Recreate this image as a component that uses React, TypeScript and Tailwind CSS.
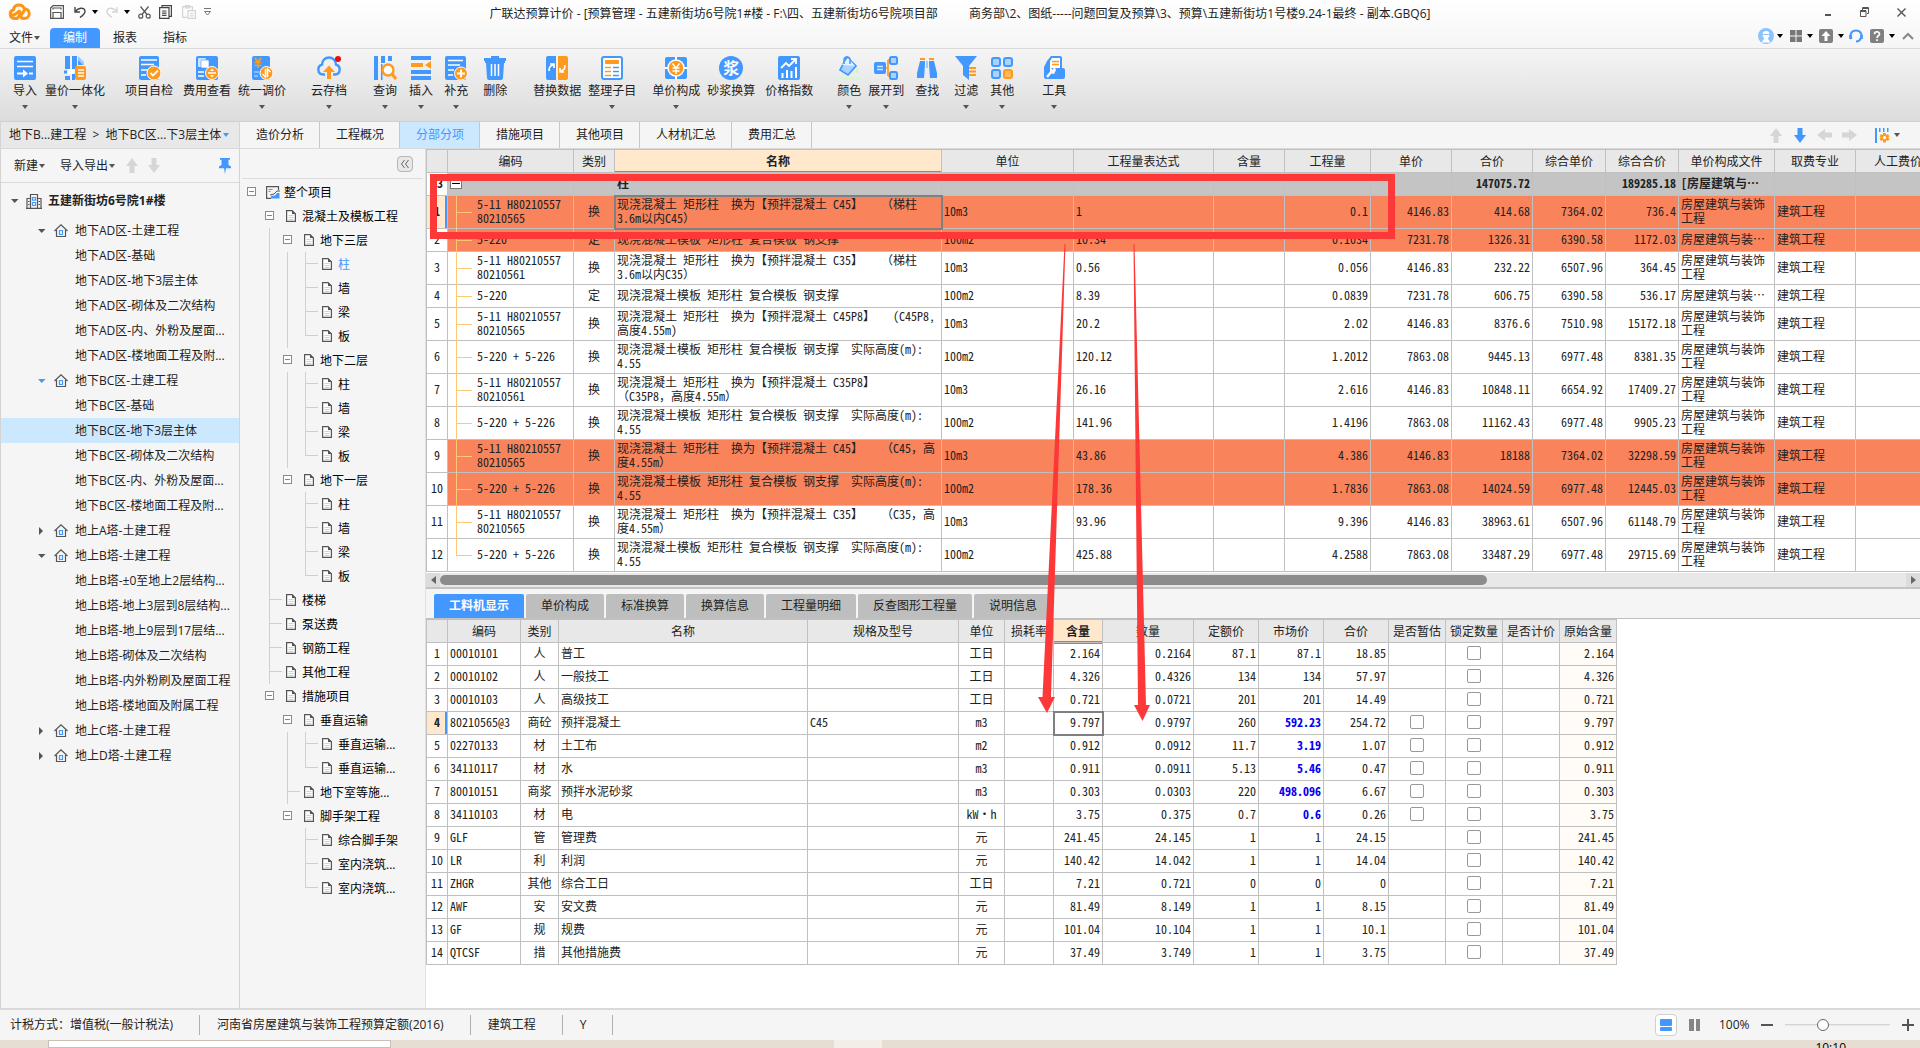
import { useState } from 'react'
import type { ReactNode } from 'react'

const B = '#4398ff'
const O = '#ff9a1e'

function Caret({ className = 'text-[#555]' }: { className?: string }) {
  return (
    <svg width="6" height="4" viewBox="0 0 6 4" className={`shrink-0 ${className}`}>
      <path d="M0 0h6L3 4z" fill="currentColor" />
    </svg>
  )
}

/* ---------- ribbon icons ---------- */

const icons: Record<string, ReactNode> = {
  import: (
    <>
      <rect x="1" width="22" height="24" rx="2" fill={B} />
      <path d="M4 5.5h16M4 10.5h16" stroke="#fff" strokeWidth="1.6" />
      <path d="M4 17.5h7" stroke="#fff" strokeWidth="2" />
      <path d="M10 13.5l5 4-5 4z" fill="#fff" />
      <path d="M16 17.5h4" stroke="#fff" strokeWidth="2" />
    </>
  ),
  merge: (
    <>
      <path d="M2 0h5v13H2zM2 20h5v4H2zM9 0h5v13H9zM9 18h3v6H9z" fill={B} />
      <path d="M15 0l6 6v3h-6z" fill="#9ccbff" />
      <path d="M15 4v5h5z" fill={B} />
      <rect x="5" y="13" width="6" height="5" fill="#fff" />
      <path d="M1 14.5h3v3H1z" fill={B} />
      <rect x="12" y="10" width="11" height="14" rx="2" fill={O} />
      <path d="M15 14h6M15 17h6M15 20h6" stroke="#fff" strokeWidth="1.3" />
    </>
  ),
  check: (
    <>
      <rect x="2" width="20" height="24" rx="2" fill={B} />
      <path d="M4 4h16M4 8.5h13M4 14h7M4 19h5" stroke="#fff" strokeWidth="1.5" />
      <circle cx="17" cy="17" r="7" fill={O} stroke="#fff" />
      <path d="M13.5 17l2.5 2.5 5-5" fill="none" stroke="#fff" strokeWidth="1.8" />
    </>
  ),
  fee: (
    <>
      <rect x="1" width="22" height="24" rx="2" fill={B} />
      <rect x="3" y="2" width="8" height="9" rx="1" fill="#cfe5ff" />
      <rect x="6" y="4" width="8" height="8" rx="1" fill="#fff" stroke={B} strokeWidth=".6" />
      <path d="M3 16h6M3 20h6" stroke="#fff" strokeWidth="1.5" />
      <circle cx="17" cy="17" r="6.5" fill={O} stroke="#fff" />
      <path d="M13 17h8" stroke="#fff" strokeWidth="1.5" />
      <path d="M17 12.5l2 2.5h-4zM17 21.5l2-2.5h-4z" fill="#fff" />
    </>
  ),
  adjust: (
    <>
      <rect x="2" width="18" height="24" rx="2" fill={B} />
      <path d="M5 2l3 4 3-4M8 6v6M4.5 6.5h7M4.5 9.5h7" fill="none" stroke={O} strokeWidth="1.7" />
      <path d="M4 16h5M4 20h4" stroke="#9ccbff" strokeWidth="1.5" />
      <circle cx="16.5" cy="17" r="6.5" fill={O} stroke="#fff" />
      <path d="M15.5 13v8l-3-3M17.5 21v-8l3 3" fill="none" stroke="#fff" strokeWidth="1.5" />
    </>
  ),
  cloud: (
    <>
      <path d="M8 18.5H6a5 5 0 0 1-1-9.8C5 4 8.5 1.5 12 1.5S19 4 19 8.7a5 5 0 0 1-1 9.8h-2" fill="none" stroke={B} strokeWidth="2.4" />
      <path d="M12 9.5l6 6.5h-4v7h-4v-7H6z" fill={O} />
      <circle cx="21" cy="3" r="3" fill="#f5050a" />
    </>
  ),
  query: (
    <>
      <path d="M1 0h4v24H1zM8 0h4v7H8zM15 0h4v5h-4z" fill={B} />
      <path d="M8 8h1.5v16H8z" fill={B} />
      <circle cx="15" cy="14" r="5.5" fill="#fff" stroke={O} strokeWidth="2.4" />
      <path d="M19 18l4 5" stroke={O} strokeWidth="3" />
    </>
  ),
  insert: (
    <>
      <path d="M2 0h20v4H2zM2 14h20v4H2zM2 20h20v4H2z" fill={B} />
      <path d="M2 7h12v4H2z" fill={O} />
      <path d="M22 5v8l-6-4z" fill={O} />
    </>
  ),
  add: (
    <>
      <rect x="1" width="21" height="24" rx="2" fill={B} />
      <path d="M4 4.5h15M4 9h12M4 14h6M4 19h5" stroke="#fff" strokeWidth="1.5" />
      <circle cx="17" cy="17.5" r="6.5" fill={O} stroke="#fff" />
      <path d="M13 17.5h8M17 13.5v8" stroke="#fff" strokeWidth="1.8" />
    </>
  ),
  trash: (
    <>
      <path d="M1 2h7V0h8v2h7v3H1zM3 7h18l-1 15a2 2 0 0 1-2 2H6a2 2 0 0 1-2-2z" fill={B} />
      <path d="M2 5h20v2H2z" fill={B} />
      <path d="M8.5 8v12M12 8v12M15.5 8v12" stroke="#fff" strokeWidth="1.5" />
    </>
  ),
  replace: (
    <>
      <path d="M1 2a2 2 0 0 1 2-2h8v24H3a2 2 0 0 1-2-2z" fill={B} />
      <path d="M13 0h8a2 2 0 0 1 2 2v20a2 2 0 0 1-2 2h-8z" fill={O} />
      <path d="M4 15c0-4 1-5 4-6M5 8h4v4" fill="none" stroke="#fff" strokeWidth="1.7" />
      <path d="M20 9c0 4-1 5-4 6M19 16h-4v-4" fill="none" stroke="#fff" strokeWidth="1.7" />
    </>
  ),
  arrange: (
    <>
      <rect x="2" y="1" width="20" height="22" rx="2" fill="#fff" stroke={B} strokeWidth="2" />
      <rect x="5" y="4" width="14" height="4" rx="1" fill={O} />
      <path d="M5 11.5h6M5 15.5h6M5 19.5h6" stroke={O} strokeWidth="1.7" />
      <path d="M13 11.5h6M13 15.5h6M13 19.5h6" stroke={B} strokeWidth="1.7" />
    </>
  ),
  price: (
    <>
      <rect x="1" y="1" width="22" height="22" rx="2" fill={B} />
      <path d="M12 1v4M12 19v4M1 12h4M19 12h4" stroke="#fff" strokeWidth="2" />
      <circle cx="12" cy="12" r="8" fill={O} stroke="#fff" strokeWidth="1.5" />
      <path d="M8.5 7.5l3.5 4.5 3.5-4.5M12 12v6M8.5 12h7M8.5 15h7" fill="none" stroke="#fff" strokeWidth="1.4" />
    </>
  ),
  index: (
    <>
      <rect x="1" width="22" height="24" rx="2" fill={B} />
      <path d="M4 12l5-5 3 3 6-6M14 3h5v5" fill="none" stroke="#fff" strokeWidth="1.8" />
      <path d="M5.5 22v-5M10 22v-8M14.5 22v-7M19 22V11" stroke="#fff" strokeWidth="2" />
    </>
  ),
  color: (
    <>
      <path d="M10 1l9 9-8 9-8-5z" fill="#a9d2ff" stroke={B} strokeWidth="1.7" />
      <path d="M5 9l6-7 7 8z" fill="#e4f1ff" />
      <path d="M7 8V4a3 3 0 0 1 6 0v4" fill="none" stroke={B} strokeWidth="1.5" />
      <path d="M20 12c2 3 2 5 0 5s-2-2 0-5z" fill="#cdf5bd" />
      <path d="M1 21h22v3H1z" fill="#d9f7cd" />
    </>
  ),
  expand: (
    <>
      <path d="M10 12h4M14 4v16M14 4h3M14 20h3" fill="none" stroke={O} strokeWidth="1.7" />
      <rect x="0" y="6" width="12" height="12" rx="2" fill={B} />
      <path d="M3 10.5h6M3 13.5h6" stroke="#cfe5ff" strokeWidth="1.5" />
      <rect x="16" y="1" width="7" height="7" rx="1.5" fill="#a9d2ff" stroke={B} strokeWidth="2" />
      <rect x="16" y="16" width="7" height="7" rx="1.5" fill="#a9d2ff" stroke={B} strokeWidth="2" />
    </>
  ),
  find: (
    <>
      <path d="M5 2h5v2H5zM14 2h5v2h-5z" fill={O} />
      <path d="M5 5h5v4l-1 13H2v-5zM14 5h5l3 12v5h-7L14 9z" fill={B} />
      <path d="M11 5h2v7h-2z" fill="#9ccbff" />
    </>
  ),
  filter: (
    <>
      <path d="M1 0h22l-8 10v14l-6-5v-9z" fill={B} />
      <path d="M15 12h7M15 15.5h7M15 19h7" stroke={O} strokeWidth="2" />
    </>
  ),
  other: (
    <>
      <rect x="2" y="2" width="8" height="8" rx="2" fill="#a9d2ff" stroke={B} strokeWidth="2" />
      <rect x="14" y="2" width="8" height="8" rx="2" fill="#a9d2ff" stroke={B} strokeWidth="2" />
      <rect x="2" y="14" width="8" height="8" rx="2" fill="#a9d2ff" stroke={B} strokeWidth="2" />
      <rect x="14" y="14" width="8" height="8" rx="2" fill="#ffb95e" stroke={O} strokeWidth="2" />
    </>
  ),
  tool: (
    <>
      <path d="M5 5l4-5h9a2 2 0 0 1 2 2v10h1a2 2 0 0 1 2 2v7a2 2 0 0 1-2 2H4a2 2 0 0 1-2-2V11z" fill={B} />
      <path d="M8 5l2-3h8v10H8z" fill="#fff" />
      <path d="M10 5.5h7M10 8.5h7" stroke={O} strokeWidth="1.7" />
      <path d="M5 21l5-6" stroke="#fff" strokeWidth="2.4" />
      <path d="M8 11l3 3 1-4 2 4-2 4-4-1z" fill="#fff" />
    </>
  ),
}

function Mortar() {
  return (
    <span className="flex size-6 items-center justify-center rounded-full bg-[#4398ff] text-base leading-6 font-bold text-white">浆</span>
  )
}

type Tool = { label: string; icon: string; gap: string; more?: boolean }

const tools: Tool[] = [
  { label: '导入', icon: 'import', gap: 'ml-[13px]', more: true },
  { label: '量价一体化', icon: 'merge', gap: 'ml-2', more: true },
  { label: '项目自检', icon: 'check', gap: 'ml-5' },
  { label: '费用查看', icon: 'fee', gap: 'ml-2.5' },
  { label: '统一调价', icon: 'adjust', gap: 'ml-[7px]', more: true },
  { label: '云存档', icon: 'cloud', gap: 'ml-[25px]', more: true },
  { label: '查询', icon: 'query', gap: 'ml-[26px]', more: true },
  { label: '插入', icon: 'insert', gap: 'ml-3', more: true },
  { label: '补充', icon: 'add', gap: 'ml-[11px]', more: true },
  { label: '删除', icon: 'trash', gap: 'ml-[15px]' },
  { label: '替换数据', icon: 'replace', gap: 'ml-[26px]' },
  { label: '整理子目', icon: 'arrange', gap: 'ml-[7px]', more: true },
  { label: '单价构成', icon: 'price', gap: 'ml-4', more: true },
  { label: '砂浆换算', icon: 'mortar', gap: 'ml-[7px]' },
  { label: '价格指数', icon: 'index', gap: 'ml-2.5' },
  { label: '颜色', icon: 'color', gap: 'ml-6', more: true },
  { label: '展开到', icon: 'expand', gap: 'ml-[7px]', more: true },
  { label: '查找', icon: 'find', gap: 'ml-[11px]' },
  { label: '过滤', icon: 'filter', gap: 'ml-[15px]', more: true },
  { label: '其他', icon: 'other', gap: 'ml-3', more: true },
  { label: '工具', icon: 'tool', gap: 'ml-7', more: true },
]

function Ribbon() {
  return (
    <div className="flex h-[73px] shrink-0 items-start border-b border-[#cfcfcf] bg-linear-to-b from-[#f5f5f5] to-[#dcdcdc] pt-[7px]">
      {tools.map(t => (
        <button key={t.label} type="button" className={`flex shrink-0 flex-col items-center ${t.gap}`}>
          {t.icon === 'mortar' ? (
            <Mortar />
          ) : (
            <svg width="24" height="24" viewBox="0 0 24 24">{icons[t.icon]}</svg>
          )}
          <span className="mt-[3px] leading-4 whitespace-nowrap">{t.label}</span>
          {t.more && <Caret className="mt-[6px] text-[#555]" />}
        </button>
      ))}
    </div>
  )
}

/* ---------- title bar ---------- */

function TitleBar() {
  return (
    <div className="grid h-7 shrink-0 grid-cols-[1fr_auto_1fr] items-center">
      <div className="flex items-center pb-1 pl-2">
        <svg width="23" height="18" viewBox="0 0 23 18">
          <path
            d="M9 15.500H6.500a4.500 4.500 0 0 1-1-8.800C6 3.500 8.500 2 11 2s4.500 1.200 5.200 3.700c3 0 5 2.200 5 5s-2.200 4.800-5.200 4.800c-2 0-3-1-3-2.500 0-3 3-3 3-5.500M4 12.500c3-.5 4.500-2 6-3.500 1.500-1.300 2-1 2 .5 0 3-2 6-4 6"
            fill="none"
            stroke="#ff9415"
            strokeWidth="3"
            strokeLinecap="round"
          />
        </svg>
        <button type="button" aria-label="保存" className="ml-[19px]">
          <svg width="14" height="14" viewBox="0 0 14 14" fill="none" stroke="#555" strokeWidth="1.2">
            <path d="M.6 3L3 .6h10.400v12.800H.6zM3 4.500V3h8v1.500M3 13V7.500h8V13" />
          </svg>
        </button>
        <button type="button" aria-label="撤销" className="ml-2.5 flex items-center gap-1.5">
          <svg width="12" height="12" viewBox="0 0 12 12" fill="none" stroke="#444" strokeWidth="1.4">
            <path d="M1 1v5h5M1.500 5.500C3.500 2 10.500.5 11 5c.3 3-2 4.500-5 6.500" />
          </svg>
          <Caret className="text-black" />
        </button>
        <button type="button" aria-label="重做" className="ml-2 flex items-center gap-1.5">
          <svg width="12" height="12" viewBox="0 0 12 12" fill="none" stroke="#d5d5d5" strokeWidth="1.4">
            <path d="M11 1v5H6M10.500 5.500C8.500 2 1.500.5 1 5c-.3 3 2 4.500 5 6.500" />
          </svg>
          <Caret className="text-black" />
        </button>
        <button type="button" aria-label="剪切" className="ml-2">
          <svg width="13" height="13" viewBox="0 0 13 13" fill="none" stroke="#555" strokeWidth="1.2">
            <path d="M2.500.5l6.500 8M10.500.5L4 8.500" />
            <circle cx="2.800" cy="10.200" r="2" />
            <circle cx="10.200" cy="10.200" r="2" />
          </svg>
        </button>
        <button type="button" aria-label="复制" className="ml-2">
          <svg width="13" height="14" viewBox="0 0 13 14" fill="none" stroke="#444" strokeWidth="1.2">
            <path d="M3 2.500V.6h9.400v10.800H10M.6 2.600H10v10.800H.6zM3 6h4.500M3 8.200h4.500M3 10.400h4.500" />
          </svg>
        </button>
        <button type="button" aria-label="粘贴" className="ml-2.5">
          <svg width="14" height="14" viewBox="0 0 14 14" fill="none" stroke="#d5d5d5" strokeWidth="1.2">
            <path d="M5 12.400H.6V1.600h9.800V5M3.500 3V.6h4V3zM6 5.600h7.400v7.800H6zM8 8.500h3.500M8 10.800h3.500" />
          </svg>
        </button>
        <button type="button" aria-label="自定义" className="ml-2">
          <svg width="7" height="8" viewBox="0 0 7 8" fill="none" stroke="#777">
            <path d="M0 .5h7M.5 3.500h6L3.500 7z" />
          </svg>
        </button>
      </div>
      <h1 className="whitespace-pre">
        {'广联达预算计价 - [预算管理 - 五建新街坊6号院1#楼 - F:\\四、五建新街坊6号院项目部          商务部\\2、图纸-----问题回复及预算\\3、预算\\五建新街坊1号楼9.24-1最终 - 副本.GBQ6]'}
      </h1>
      <div className="flex items-center justify-end gap-7 pr-3.5 pb-1 text-[#555]">
        <button type="button" aria-label="最小化">
          <svg width="8" height="10" viewBox="0 0 8 10"><path d="M1 7h6v2H1z" fill="#555" /></svg>
        </button>
        <button type="button" aria-label="还原">
          <svg width="9" height="10" viewBox="0 0 9 10" fill="none" stroke="#555"><path d="M2.500 3V.5h6v6H7M.5 3.500H6v6H.5zM2.500 1.500h6M.5 4.500H6" /></svg>
        </button>
        <button type="button" aria-label="关闭">
          <svg width="9" height="9" viewBox="0 0 9 9" fill="none" stroke="#555" strokeWidth="1.4"><path d="M.5.5l8 8M8.500.5l-8 8" /></svg>
        </button>
      </div>
    </div>
  )
}

function MenuRow() {
  return (
    <nav className="flex h-[21px] shrink-0 border-b border-[#d9d9d9]">
      <button type="button" className="flex w-[50px] items-center gap-px pl-[9px]">
        文件
        <Caret />
      </button>
      <button type="button" className="w-[50px] rounded-t-sm bg-[#4398ff] text-white">编制</button>
      <button type="button" className="w-[50px]">报表</button>
      <button type="button" className="w-[50px]">指标</button>
      <div className="ml-auto flex h-4 items-center pr-[6px]">
        <button type="button" aria-label="用户" className="flex items-center gap-[3px]">
          <svg width="16" height="16" viewBox="0 0 16 16">
            <circle cx="8" cy="8" r="8" fill="#8cc3ff" />
            <path d="M4.500 6.500a3.500 3.500 0 0 1 7 0c0 2.500-1.500 3-1.500 4.500l2.500 3.500h-9L6 11c0-1.500-1.500-2-1.500-4.500z" fill="#fff" />
            <path d="M4 6.500h8" stroke="#8cc3ff" />
          </svg>
          <Caret className="text-black" />
        </button>
        <button type="button" aria-label="应用" className="ml-[7px] flex items-center gap-[5px]">
          <svg width="12" height="12" viewBox="0 0 12 12"><path d="M0 0h5.500v5.500H0zM6.500 0H12v5.500H6.500zM0 6.500h5.500V12H0zM6.500 6.500H12V12H6.500z" fill="#777" /></svg>
          <Caret className="text-black" />
        </button>
        <button type="button" aria-label="升级" className="ml-1.5 flex items-center gap-[5px]">
          <svg width="14" height="14" viewBox="0 0 14 14"><rect width="14" height="14" rx="2" fill="#808080" /><path d="M7 2l4.500 5H8.500v5h-3V7h-3z" fill="#fff" /></svg>
          <Caret className="text-black" />
        </button>
        <button type="button" aria-label="客服" className="ml-[5px]">
          <svg width="14" height="14" viewBox="0 0 14 14" fill="none" stroke="#4398ff" strokeWidth="2">
            <path d="M2.500 10C.5 7 1.500 1.500 7 1.500S13.500 7 11.500 10M11.500 9.500c-.5 2-2 3-4.500 3" />
            <path d="M1.500 6v4M12.500 6v4" strokeWidth="2.600" />
          </svg>
        </button>
        <button type="button" aria-label="帮助" className="ml-[7px] flex items-center gap-[5px]">
          <svg width="14" height="14" viewBox="0 0 14 14">
            <rect width="14" height="14" rx="2" fill="#808080" />
            <path d="M4.500 5.200C4.500 2 9.500 2 9.500 5c0 1.800-2.500 1.800-2.500 4" fill="none" stroke="#fff" strokeWidth="1.7" />
            <path d="M6.100 10.200h1.800V12H6.100z" fill="#fff" />
          </svg>
          <Caret className="text-black" />
        </button>
        <button type="button" aria-label="收起" className="ml-[7px]">
          <svg width="12" height="8" viewBox="0 0 12 8" fill="none" stroke="#888" strokeWidth="2"><path d="M1 7l5-5 5 5" /></svg>
        </button>
      </div>
    </nav>
  )
}

/* ---------- page tabs ---------- */

function Arrow({ dir, color }: { dir: 'up' | 'down' | 'left' | 'right'; color: string }) {
  const d = {
    up: 'M7 0l6 8H9.500v7h-5V8H1z',
    down: 'M7 15l6-8H9.500V0h-5v7H1z',
    left: 'M0 7l8-6v3.500h7v5H8V13z',
    right: 'M15 7L7 1v3.500H0v5h7V13z',
  }[dir]
  const flat = dir === 'left' || dir === 'right'
  return (
    <svg width={flat ? 15 : 14} height={flat ? 14 : 15} viewBox={flat ? '0 0 15 14' : '0 0 14 15'}>
      <path d={d} fill={color} />
    </svg>
  )
}

const pageTabs = ['造价分析', '工程概况', '分部分项', '措施项目', '其他项目', '人材机汇总', '费用汇总']

function PageTabs() {
  const [tab, setTab] = useState('分部分项')
  return (
    <div className="flex h-[27px] shrink-0 border-b border-[#d9d9d9] bg-[#f5f5f5]">
      <button type="button" className="flex w-60 items-center gap-0.5 border-x border-[#d4d4d4] bg-[#e8e8e8] pl-2 whitespace-pre">
        {'地下B...建工程  >  地下BC区...下3层主体'}
        <Caret className="text-[#4398ff]" />
      </button>
      {pageTabs.map(t => (
        <button
          key={t}
          type="button"
          onClick={() => setTab(t)}
          className={`border-r border-[#c8c8c8] pr-[15px] pl-4 ${t === tab ? 'bg-[#cce8ff] text-[#4398ff]' : ''}`}
        >
          {t}
        </button>
      ))}
      <div className="ml-auto flex items-center gap-2.5 pr-5">
        <button type="button" aria-label="上移"><Arrow dir="up" color="#d6d6d6" /></button>
        <button type="button" aria-label="下移"><Arrow dir="down" color={B} /></button>
        <button type="button" aria-label="左移"><Arrow dir="left" color="#d6d6d6" /></button>
        <button type="button" aria-label="右移"><Arrow dir="right" color="#d6d6d6" /></button>
        <button type="button" aria-label="列设置" className="ml-2 flex items-center gap-1">
          <svg width="15" height="15" viewBox="0 0 15 15">
            <path d="M0 0h2v15H0zM4 0h1.500v4H4zM8 0h1.500v4H8zM12 0h1.500v4H12z" fill={B} />
            <path d="M8 5h3v2l2-1 1.500 2.500L13 9.500l1.500 1L13 13l-2-1v2.500H8V12l-2 1-1.500-2.500 1.500-1-1.500-1L6 6l2 1z" fill={O} />
            <circle cx="9.500" cy="9.600" r="1.600" fill="#fff" />
          </svg>
          <Caret />
        </button>
      </div>
    </div>
  )
}

/* ---------- project tree ---------- */

function House() {
  return (
    <svg width="14" height="13" viewBox="0 0 14 13" fill="none" className="shrink-0">
      <path d="M.5 7L7 .8 13.500 7M2.500 6v6.500h9V6" stroke="#555" strokeWidth="1.2" />
      <path d="M5.500 6.500h3v4h-3z" stroke={B} strokeWidth="1.2" />
    </svg>
  )
}

type Unit = { name: string; open: boolean; active?: boolean; parts: string[] }

const units: Unit[] = [
  {
    name: '地下AD区-土建工程',
    open: true,
    parts: ['地下AD区-基础', '地下AD区-地下3层主体', '地下AD区-砌体及二次结构', '地下AD区-内、外粉及屋面...', '地下AD区-楼地面工程及附...'],
  },
  {
    name: '地下BC区-土建工程',
    open: true,
    active: true,
    parts: ['地下BC区-基础', '地下BC区-地下3层主体', '地下BC区-砌体及二次结构', '地下BC区-内、外粉及屋面...', '地下BC区-楼地面工程及附...'],
  },
  { name: '地上A塔-土建工程', open: false, parts: [] },
  {
    name: '地上B塔-土建工程',
    open: true,
    parts: ['地上B塔-±0至地上2层结构...', '地上B塔-地上3层到8层结构...', '地上B塔-地上9层到17层结...', '地上B塔-砌体及二次结构', '地上B塔-内外粉刷及屋面工程', '地上B塔-楼地面及附属工程'],
  },
  { name: '地上C塔-土建工程', open: false, parts: [] },
  { name: '地上D塔-土建工程', open: false, parts: [] },
]

function Toggle({ open, color = '#555' }: { open: boolean; color?: string }) {
  return (
    <svg width="8" height="8" viewBox="0 0 8 8" className="shrink-0">
      <path d={open ? 'M0 2h7.500L3.700 6z' : 'M1 0l4 4-4 4z'} fill={color} />
    </svg>
  )
}

function ProjectTree() {
  const [selected, setSelected] = useState('地下BC区-地下3层主体')
  return (
    <aside className="w-60 shrink-0 overflow-hidden border-x border-[#d4d4d4] bg-[#f5f5f5]">
      <div className="flex h-[34px] items-center border-b border-[#d9d9d9] pl-[13px]">
        <button type="button" className="flex items-center gap-px">新建<Caret /></button>
        <button type="button" className="ml-[15px] flex items-center gap-px">导入导出<Caret /></button>
        <button type="button" aria-label="上移" className="ml-2.5"><Arrow dir="up" color="#d6d6d6" /></button>
        <button type="button" aria-label="下移" className="ml-2"><Arrow dir="down" color="#d6d6d6" /></button>
        <button type="button" aria-label="固定" className="mr-2 ml-auto">
          <svg width="12" height="16" viewBox="0 0 12 16"><path d="M1 0h10v1.800H9.500V7L12 8.500v1.800H7L6 16l-1-5.700H0V8.500L2.500 7V1.800H1z" fill={B} /></svg>
        </button>
      </div>
      <div className="flex h-[35px] items-center pl-2.5 font-bold">
        <Toggle open />
        <svg width="16" height="16" viewBox="0 0 16 16" fill="none" className="mr-1.5 ml-[7px]">
          <path d="M4.500 15V1.500h7V15M4.500 5.500H1V15M11.500 5.500H15V15M0 15.400h16M2 8.500h1.500M2 11.500h1.500M12.500 8.500H14M12.500 11.500H14" stroke="#555" strokeWidth="1.2" />
          <path d="M6.500 4.500h3v2.700h-3zM6.500 9.500h3v3h-3z" stroke={B} strokeWidth="1.2" />
        </svg>
        五建新街坊6号院1#楼
      </div>
      {units.map(u => (
        <div key={u.name}>
          <button type="button" className="flex h-[25px] w-full items-center pl-[37px]">
            <Toggle open={u.open} color={u.active ? B : '#555'} />
            <span className="mr-[7px] ml-2"><House /></span>
            {u.name}
          </button>
          {u.parts.map(p => (
            <button
              key={p}
              type="button"
              onClick={() => setSelected(p)}
              className={`block h-[25px] w-full pl-[74px] text-left whitespace-nowrap ${p === selected ? 'bg-[#cce8ff]' : ''}`}
            >
              {p}
            </button>
          ))}
        </div>
      ))}
    </aside>
  )
}

/* ---------- section tree ---------- */

// guides: one letter per column. "|" line, "+" line with branch, "L" last branch, "o" expander, " " empty
const sections: [string, string][] = [
  ['o', '整个项目'],
  [' o', '混凝土及模板工程'],
  [' |o', '地下三层'],
  [' ||+', '柱'],
  [' ||+', '墙'],
  [' ||+', '梁'],
  [' ||L', '板'],
  [' |o', '地下二层'],
  [' ||+', '柱'],
  [' ||+', '墙'],
  [' ||+', '梁'],
  [' ||L', '板'],
  [' |o', '地下一层'],
  [' | +', '柱'],
  [' | +', '墙'],
  [' | +', '梁'],
  [' | L', '板'],
  [' +', '楼梯'],
  [' +', '泵送费'],
  [' +', '钢筋工程'],
  [' +', '其他工程'],
  [' o', '措施项目'],
  ['  o', '垂直运输'],
  ['  |+', '垂直运输...'],
  ['  |L', '垂直运输...'],
  ['  +', '地下室等施...'],
  ['  o', '脚手架工程'],
  ['   +', '综合脚手架'],
  ['   +', '室内浇筑...'],
  ['   L', '室内浇筑...'],
]

function Guide({ kind }: { kind: string }) {
  return (
    <svg width="18" height="24" viewBox="0 0 18 24" fill="none" className="shrink-0" shapeRendering="crispEdges">
      {(kind === '|' || kind === '+') && <path d="M5.500 0v24" stroke="#ffc877" />}
      {kind === 'L' && <path d="M5.500 0v12" stroke="#ffc877" />}
      {(kind === '+' || kind === 'L') && <path d="M5 11.500h13" stroke="#ffc877" />}
      {kind === 'o' && (
        <>
          <rect x="1.500" y="7.500" width="8" height="8" fill="#fff" stroke="#8a8a8a" />
          <path d="M3 11.500h5" stroke="#2aa5d8" />
        </>
      )}
    </svg>
  )
}

function SectionTree() {
  return (
    <aside className="w-[186px] shrink-0 overflow-hidden border-r border-[#e0e0e0] bg-[#f5f5f5]">
      <div className="mx-0.5 mb-px flex h-[30px] items-center justify-end border-b border-[#dcdcdc] pr-2.5">
        <button type="button" aria-label="折叠" className="rounded-sm border border-[#b5b5b5] bg-[#e8e8e8] p-[3px]">
          <svg width="8" height="8" viewBox="0 0 8 8" fill="none" stroke="#666"><path d="M3.500 0l-3 4 3 4M7.500 0l-3 4 3 4" /></svg>
        </button>
      </div>
      {sections.map(([guides, name], i) => (
        <button key={i} type="button" className={`flex h-6 w-full items-center pl-1.5 whitespace-nowrap ${i === 3 ? 'text-[#4398ff]' : 'text-black'}`}>
          {guides.split('').map((g, k) => (
            <Guide key={k} kind={g} />
          ))}
          {i === 0 ? (
            <svg width="14" height="13" viewBox="0 0 14 13" fill="none" className="mr-1 ml-0.5">
              <path d="M12.500 4V.6H.6v11.800H5" stroke="#555" strokeWidth="1.2" />
              <path d="M2.500 3.500h4M2.500 5.500h2" stroke={B} />
              <path d="M4 9l4-1 3-3h3" stroke="#555" />
              <path d="M5 12.500V10l4-.5 2-2.500h2.500v5.500z" fill={B} />
            </svg>
          ) : (
            <svg width="10" height="12" viewBox="0 0 10 12" fill="none" className="mr-1.5 ml-1">
              <path d="M.6.6H6L9.400 4v7.400H.6z" fill="#fff" stroke="#555" strokeWidth="1.2" />
              <path d="M6 0l4 4H6z" fill="#555" />
              <path d="M2.500 5.500h5M2.500 7.500h5M2.500 9.500h5" stroke="#bbb" strokeWidth=".7" />
            </svg>
          )}
          <span className="pt-px">{name}</span>
        </button>
      ))}
    </aside>
  )
}

/* ---------- quota table ---------- */

type Quota = [no: string, code: string, kind: string, name: string, unit: string, expr: string, qty: string, price: string, total: string, cPrice: string, cTotal: string]

const quotas: Quota[] = [
  ['1', '5-11 H80210557\n80210565', '换', '现浇混凝土 矩形柱  换为【预拌混凝土 C45】   （梯柱\n3.6m以内C45）', '10m3', '1', '0.1', '4146.83', '414.68', '7364.02', '736.4'],
  ['2', '5-220', '定', '现浇混凝土模板 矩形柱 复合模板 钢支撑', '100m2', '10.34', '0.1034', '7231.78', '1326.31', '6390.58', '1172.03'],
  ['3', '5-11 H80210557\n80210561', '换', '现浇混凝土 矩形柱  换为【预拌混凝土 C35】   （梯柱\n3.6m以内C35）', '10m3', '0.56', '0.056', '4146.83', '232.22', '6507.96', '364.45'],
  ['4', '5-220', '定', '现浇混凝土模板 矩形柱 复合模板 钢支撑', '100m2', '8.39', '0.0839', '7231.78', '606.75', '6390.58', '536.17'],
  ['5', '5-11 H80210557\n80210565', '换', '现浇混凝土 矩形柱  换为【预拌混凝土 C45P8】   (C45P8,\n高度4.55m)', '10m3', '20.2', '2.02', '4146.83', '8376.6', '7510.98', '15172.18'],
  ['6', '5-220 + 5-226', '换', '现浇混凝土模板 矩形柱 复合模板 钢支撑  实际高度(m):\n4.55', '100m2', '120.12', '1.2012', '7863.08', '9445.13', '6977.48', '8381.35'],
  ['7', '5-11 H80210557\n80210561', '换', '现浇混凝土 矩形柱  换为【预拌混凝土 C35P8】\n（C35P8，高度4.55m）', '10m3', '26.16', '2.616', '4146.83', '10848.11', '6654.92', '17409.27'],
  ['8', '5-220 + 5-226', '换', '现浇混凝土模板 矩形柱 复合模板 钢支撑  实际高度(m):\n4.55', '100m2', '141.96', '1.4196', '7863.08', '11162.43', '6977.48', '9905.23'],
  ['9', '5-11 H80210557\n80210565', '换', '现浇混凝土 矩形柱  换为【预拌混凝土 C45】   （C45，高\n度4.55m）', '10m3', '43.86', '4.386', '4146.83', '18188', '7364.02', '32298.59'],
  ['10', '5-220 + 5-226', '换', '现浇混凝土模板 矩形柱 复合模板 钢支撑  实际高度(m):\n4.55', '100m2', '178.36', '1.7836', '7863.08', '14024.59', '6977.48', '12445.03'],
  ['11', '5-11 H80210557\n80210565', '换', '现浇混凝土 矩形柱  换为【预拌混凝土 C35】   （C35，高\n度4.55m）', '10m3', '93.96', '9.396', '4146.83', '38963.61', '6507.96', '61148.79'],
  ['12', '5-220 + 5-226', '换', '现浇混凝土模板 矩形柱 复合模板 钢支撑  实际高度(m):\n4.55', '100m2', '425.88', '4.2588', '7863.08', '33487.29', '6977.48', '29715.69'],
]

const marked = ['1', '2', '9', '10']

const quotaCols: [string, string][] = [
  ['', 'w-[21px]'],
  ['编码', 'w-[126px]'],
  ['类别', 'w-[41px]'],
  ['名称', 'w-[327px]'],
  ['单位', 'w-[132px]'],
  ['工程量表达式', 'w-[140px]'],
  ['含量', 'w-[71px]'],
  ['工程量', 'w-[86px]'],
  ['单价', 'w-[81px]'],
  ['合价', 'w-[81px]'],
  ['综合单价', 'w-[73px]'],
  ['综合合价', 'w-[73px]'],
  ['单价构成文件', 'w-[96px]'],
  ['取费专业', 'w-[81px]'],
  ['人工费价', 'w-[85px]'],
]

const grid =
  "table-fixed border-separate border-spacing-0 border-t border-l border-[#c0c0c0] font-['Noto_Sans_CJK_SC',sans-serif] leading-[14px] text-[#222] [font-feature-settings:'hwid'] [&_td]:border-r [&_td]:border-b [&_td]:border-[#c0c0c0] [&_td]:px-0.5 [&_td]:pb-0.5 [&_th]:h-[23px] [&_th]:border-r [&_th]:border-b [&_th]:border-[#c0c0c0] [&_th]:whitespace-nowrap"

function HeadCell({ name, active }: { name: string; active: boolean }) {
  return (
    <th
      scope="col"
      className={active ? 'bg-[#ffe8cc] font-bold shadow-[inset_0_-1px_0_#4398ff,0_1px_0_#4398ff]' : 'bg-[#e8e8e8] font-normal'}
    >
      {name}
    </th>
  )
}

// full width punctuation keeps its full cell while the rest is half width
function QuotaName({ text }: { text: string }) {
  return text.split(/([（），])/).map((part, i) =>
    i % 2 ? <span key={i} className="[font-feature-settings:normal]">{part}</span> : part,
  )
}

function QuotaTable() {
  return (
    <div className="mb-px overflow-hidden">
      <table className={`w-[1515px] ${grid}`}>
        <colgroup>
          {quotaCols.map(([n, w]) => (
            <col key={n} className={w} />
          ))}
        </colgroup>
        <thead>
          <tr>
            {quotaCols.map(([n]) => (
              <HeadCell key={n} name={n} active={n === '名称'} />
            ))}
          </tr>
        </thead>
        <tbody>
          <tr className="h-[23px] bg-[#c4c4c4] font-bold">
            <td className="bg-white text-center">B3</td>
            <td>
              <button type="button" aria-label="折叠" className="flex size-3 items-center justify-center border border-[#777] bg-white">
                <span className="h-px w-2 bg-black" />
              </button>
            </td>
            <td />
            <td>柱</td>
            <td />
            <td />
            <td />
            <td />
            <td />
            <td className="text-right">147075.72</td>
            <td />
            <td className="text-right">189285.18</td>
            <td className="whitespace-nowrap">[房屋建筑与⋯</td>
            <td />
            <td />
          </tr>
          {quotas.map(([no, code, kind, name, unit, expr, qty, price, total, cPrice, cTotal]) => {
            const short = !name.includes('\n')
            return (
              <tr key={no} className={`${short ? 'h-[23px]' : 'h-[33px]'} ${marked.includes(no) ? 'bg-[#f9835b]' : 'bg-white'}`}>
                <td className={`text-center ${no === '1' ? 'bg-[#ffe8cc] font-bold shadow-[inset_-2px_0_0_#4398ff]' : 'bg-white'}`}>{no}</td>
                <td className="relative whitespace-pre">
                  <span className={`absolute top-0 left-2 w-px bg-[#ffc877] ${no === '12' ? 'h-1/2' : '-bottom-px'}`} />
                  <span className="absolute top-1/2 left-2 h-px w-4 bg-[#ffc877]" />
                  <span className="block pl-[27px]">{code}</span>
                </td>
                <td className="text-center">{kind}</td>
                <td className={`whitespace-pre ${no === '1' ? 'outline-2 -outline-offset-1 outline-[#808080]' : ''}`}>
                  <QuotaName text={name} />
                </td>
                <td>{unit}</td>
                <td>{expr}</td>
                <td />
                <td className="text-right">{qty}</td>
                <td className="text-right">{price}</td>
                <td className="text-right">{total}</td>
                <td className="text-right">{cPrice}</td>
                <td className="text-right">{cTotal}</td>
                <td className="whitespace-pre">{short ? '房屋建筑与装⋯' : '房屋建筑与装饰\n工程'}</td>
                <td>建筑工程</td>
                <td />
              </tr>
            )
          })}
        </tbody>
      </table>
    </div>
  )
}

function ScrollBar() {
  return (
    <div className="flex h-4 shrink-0 items-stretch border-b-2 border-[#c4c4c4] bg-[#e8e8e8]">
      <button type="button" aria-label="向左" className="flex w-3.5 items-center justify-center bg-[#dcdcdc]">
        <svg width="5" height="8" viewBox="0 0 5 8"><path d="M5 0v8L0 4z" fill="#666" /></svg>
      </button>
      <div className="flex flex-1 items-center">
        <div className="h-2.5 w-5/7 rounded-full bg-[#8c8c8c]" />
      </div>
      <button type="button" aria-label="向右" className="flex w-3.5 items-center justify-center bg-[#dcdcdc]">
        <svg width="5" height="8" viewBox="0 0 5 8"><path d="M0 0v8l5-4z" fill="#666" /></svg>
      </button>
    </div>
  )
}

/* ---------- resource table ---------- */

type Resource = [code: string, kind: string, name: string, spec: string, unit: string, rate: string, qty: string, quotaPrice: string, market: string, total: string]

const resources: Resource[] = [
  ['00010101', '人', '普工', '', '工日', '2.164', '0.2164', '87.1', '87.1', '18.85'],
  ['00010102', '人', '一般技工', '', '工日', '4.326', '0.4326', '134', '134', '57.97'],
  ['00010103', '人', '高级技工', '', '工日', '0.721', '0.0721', '201', '201', '14.49'],
  ['80210565@3', '商砼', '预拌混凝土', 'C45', 'm3', '9.797', '0.9797', '260', '592.23', '254.72'],
  ['02270133', '材', '土工布', '', 'm2', '0.912', '0.0912', '11.7', '3.19', '1.07'],
  ['34110117', '材', '水', '', 'm3', '0.911', '0.0911', '5.13', '5.46', '0.47'],
  ['80010151', '商浆', '预拌水泥砂浆', '', 'm3', '0.303', '0.0303', '220', '498.096', '6.67'],
  ['34110103', '材', '电', '', 'kW·h', '3.75', '0.375', '0.7', '0.6', '0.26'],
  ['GLF', '管', '管理费', '', '元', '241.45', '24.145', '1', '1', '24.15'],
  ['LR', '利', '利润', '', '元', '140.42', '14.042', '1', '1', '14.04'],
  ['ZHGR', '其他', '综合工日', '', '工日', '7.21', '0.721', '0', '0', '0'],
  ['AWF', '安', '安文费', '', '元', '81.49', '8.149', '1', '1', '8.15'],
  ['GF', '规', '规费', '', '元', '101.04', '10.104', '1', '1', '10.1'],
  ['QTCSF', '措', '其他措施费', '', '元', '37.49', '3.749', '1', '1', '3.75'],
]

const resourceCols: [string, string][] = [
  ['', 'w-[21px]'],
  ['编码', 'w-[73px]'],
  ['类别', 'w-[38px]'],
  ['名称', 'w-[249px]'],
  ['规格及型号', 'w-[151px]'],
  ['单位', 'w-[46px]'],
  ['损耗率', 'w-[49px]'],
  ['含量', 'w-[49px]'],
  ['数量', 'w-[91px]'],
  ['定额价', 'w-[65px]'],
  ['市场价', 'w-[65px]'],
  ['合价', 'w-[65px]'],
  ['是否暂估', 'w-[57px]'],
  ['锁定数量', 'w-[57px]'],
  ['是否计价', 'w-[57px]'],
  ['原始含量', 'w-[57px]'],
]

const detailTabs = ['工料机显示', '单价构成', '标准换算', '换算信息', '工程量明细', '反查图形工程量', '说明信息']

function Tick({ label }: { label: string }) {
  return (
    <input
      type="checkbox"
      aria-label={label}
      className="mx-auto block size-3.5 appearance-none rounded-xs border border-[#999] bg-white checked:bg-[#4398ff]"
    />
  )
}

function ResourcePanel() {
  const [tab, setTab] = useState('工料机显示')
  return (
    <section className="flex min-h-0 flex-1 flex-col overflow-hidden bg-white">
      <div className="flex h-[30px] shrink-0 items-end gap-0.5 border-b border-[#c0c0c0] bg-[#f5f5f5] pl-2">
        {detailTabs.map(t => (
          <button
            key={t}
            type="button"
            onClick={() => setTab(t)}
            className={`h-6 rounded-t-xs px-[15px] ${t === tab ? 'bg-[#4398ff] font-bold text-white' : 'bg-[#bebebe]'}`}
          >
            {t}
          </button>
        ))}
      </div>
      <div className="overflow-hidden">
        <table className={`w-[1191px] ${grid}`}>
          <colgroup>
            {resourceCols.map(([n, w]) => (
              <col key={n} className={w} />
            ))}
          </colgroup>
          <thead>
            <tr>
              {resourceCols.map(([n]) => (
                <HeadCell key={n} name={n} active={n === '含量'} />
              ))}
            </tr>
          </thead>
          <tbody>
            {resources.map(([code, kind, name, spec, unit, rate, qty, quotaPrice, market, total], i) => {
              const material = i > 2 && i < 8
              const current = i === 3
              return (
                <tr key={code} className="h-[23px]">
                  <td className={`text-center ${current ? 'bg-[#ffe8cc] font-bold shadow-[inset_-2px_0_0_#4398ff]' : ''}`}>{i + 1}</td>
                  <td>{code}</td>
                  <td className="text-center whitespace-nowrap">{kind}</td>
                  <td>{name}</td>
                  <td>{spec}</td>
                  <td className="text-center">{unit}</td>
                  <td />
                  <td className={`text-right ${current ? 'outline-2 -outline-offset-1 outline-[#808080]' : ''}`}>{rate}</td>
                  <td className="text-right">{qty}</td>
                  <td className="text-right">{quotaPrice}</td>
                  <td className={`text-right ${material ? 'font-bold text-[#0000f5]' : ''}`}>{market}</td>
                  <td className="text-right">{total}</td>
                  <td>{material && <Tick label={`${name} 是否暂估`} />}</td>
                  <td><Tick label={`${name} 锁定数量`} /></td>
                  <td />
                  <td className="bg-[#fffbf6] text-right">{rate}</td>
                </tr>
              )
            })}
          </tbody>
        </table>
      </div>
    </section>
  )
}

/* ---------- red marks drawn over the tables ---------- */

function Marks() {
  return (
    <>
      <div className="pointer-events-none absolute top-[25px] left-1 h-[65px] w-[965px] border-[7px] border-[#fd3838]" />
      <svg width="120" height="480" viewBox="0 0 120 480" fill="#fd3838" className="pointer-events-none absolute top-[95px] left-[610px]">
        <path d="M28.500 0h1L15 453h4l-8 16-9-16h4.500z" />
        <path d="M97.500 0h1L110 461h4l-7.500 16L98 461h4z" />
      </svg>
    </>
  )
}

/* ---------- status bar ---------- */

function StatusBar() {
  const [zoom, setZoom] = useState(34)
  return (
    <footer className="flex h-8 shrink-0 items-center border-t-2 border-[#d9d9d9] bg-[#f5f5f5] pl-2.5">
      {['计税方式：增值税(一般计税法)', '河南省房屋建筑与装饰工程预算定额(2016)', '建筑工程', 'Y'].map(t => (
        <span key={t} className="mr-[17px] flex h-5 items-center border-r border-[#b0b0b0] pr-[26px]">{t}</span>
      ))}
      <div className="ml-auto flex items-center pr-1.5">
        <button type="button" aria-label="上下布局" className="rounded-sm border border-[#d0d0d0] bg-white p-1">
          <svg width="12" height="12" viewBox="0 0 12 12"><rect width="12" height="7" rx="1" fill={B} /><rect y="8" width="12" height="4" rx="1" fill={B} /></svg>
        </button>
        <button type="button" aria-label="左右布局" className="ml-3">
          <svg width="12" height="12" viewBox="0 0 12 12"><path d="M0 0h5v12H0zM7 0h4v12H7z" fill="#858585" /></svg>
        </button>
        <span className="ml-[18px] w-[34px]">100%</span>
        <button type="button" aria-label="缩小" className="ml-2">
          <svg width="12" height="12" viewBox="0 0 12 12"><path d="M0 5h12v2H0z" fill="#555" /></svg>
        </button>
        <input
          type="range"
          aria-label="缩放"
          value={zoom}
          onChange={e => setZoom(Number(e.target.value))}
          className="mx-3 h-3 w-[105px] appearance-none bg-linear-to-b from-transparent from-40% via-[#c8c8c8] via-40% to-transparent to-60% [&::-webkit-slider-thumb]:size-3 [&::-webkit-slider-thumb]:appearance-none [&::-webkit-slider-thumb]:rounded-full [&::-webkit-slider-thumb]:border [&::-webkit-slider-thumb]:border-[#666] [&::-webkit-slider-thumb]:bg-white"
        />
        <button type="button" aria-label="放大">
          <svg width="12" height="12" viewBox="0 0 12 12"><path d="M0 5h5V0h2v5h5v2H7v5H5V7H0z" fill="#555" /></svg>
        </button>
      </div>
    </footer>
  )
}

export default function App() {
  return (
    <div className="flex h-screen flex-col overflow-hidden bg-white font-['Open_Sans','Noto_Sans_CJK_SC',sans-serif] text-xs text-[#222]">
      <header className="bg-linear-to-b from-white to-[#f5f5f5]">
        <TitleBar />
        <MenuRow />
      </header>
      <Ribbon />
      <PageTabs />
      <div className="flex min-h-0 flex-1">
        <ProjectTree />
        <SectionTree />
        <main className="relative flex min-w-0 flex-1 flex-col">
          <QuotaTable />
          <ScrollBar />
          <ResourcePanel />
          <Marks />
        </main>
      </div>
      <StatusBar />
      {/* top edge of the desktop task bar */}
      <div className="flex h-2 shrink-0 justify-between overflow-hidden bg-[#e6ded3] pl-12">
        <div className="w-[343px] border border-[#c8c0b5] bg-white" />
        <div className="mr-[443px] ml-auto flex w-12 bg-[#f3eee8]" />
        <span className="mr-[74px] ml-[490px] leading-4 text-black">10:10</span>
      </div>
    </div>
  )
}
